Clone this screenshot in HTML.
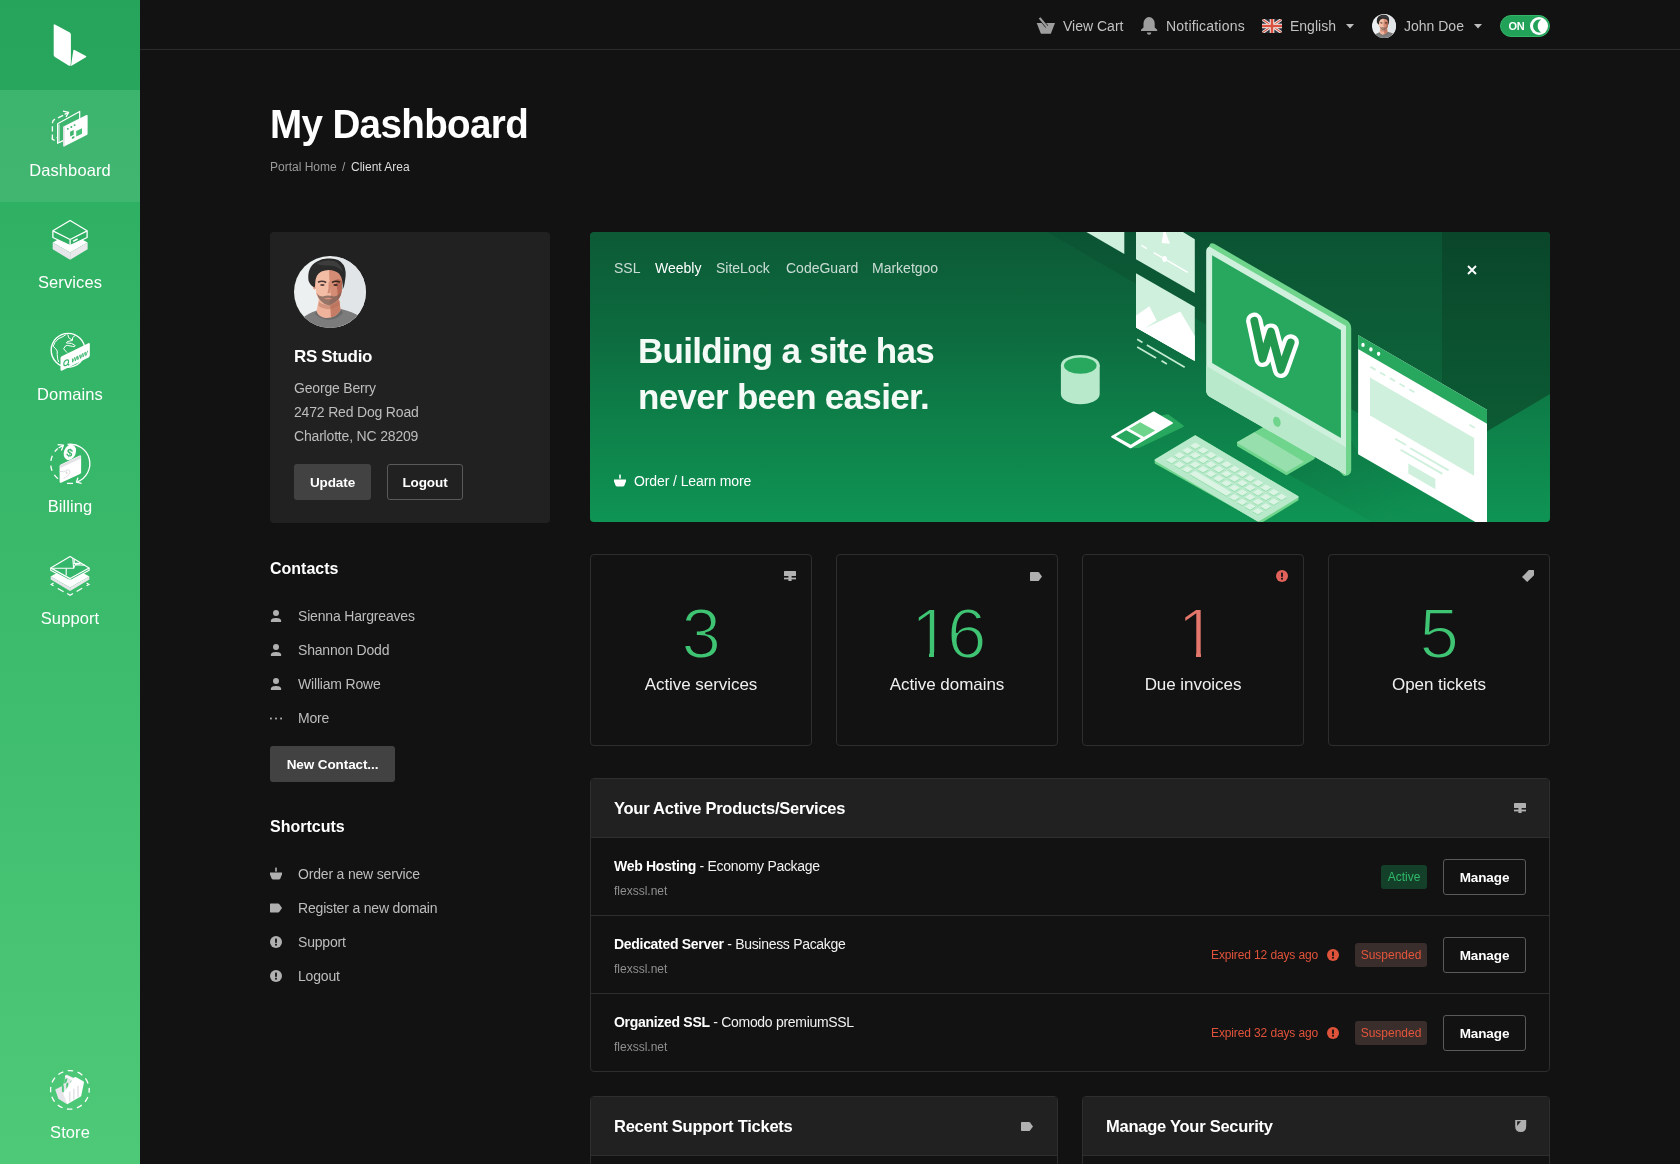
<!DOCTYPE html>
<html lang="en">
<head>
<meta charset="utf-8">
<title>My Dashboard</title>
<style>
*{box-sizing:border-box;margin:0;padding:0}
html,body{width:1680px;height:1164px;overflow:hidden;background:#121212;color:#fff;
  font-family:"Liberation Sans",Arial,sans-serif;-webkit-font-smoothing:antialiased}
.abs{position:absolute}
svg{display:block;overflow:visible}
.t{position:absolute;white-space:nowrap;line-height:1}

/* ---------- sidebar ---------- */
#side{position:absolute;left:0;top:0;width:140px;height:1164px;
  background:linear-gradient(180deg,#28ab5f 0%,#4ec978 100%)}
#side .logo{position:absolute;left:0;top:0;width:140px;height:90px;background:rgba(0,0,0,.035)}
#side .item{position:absolute;left:0;width:140px;height:112px}
#side .item.active{background:rgba(255,255,255,.085)}
#side .item .ic{position:absolute;left:44px;top:14px;width:52px;height:52px}
#side .item .lb{position:absolute;left:0;width:140px;top:70px;text-align:center;font-size:16.5px;line-height:20px;color:#fff;letter-spacing:.1px}

/* ---------- top bar ---------- */
#top{position:absolute;left:140px;top:0;width:1540px;height:50px;border-bottom:1px solid #2b2b2b}
#top .t{font-size:14px;color:#c2c2c2;top:19px}

/* ---------- heading ---------- */
#h1{left:270px;top:102.5px;font-size:41.5px;font-weight:700;letter-spacing:-.7px;color:#fff;transform:scaleX(.93);transform-origin:0 0}
.bc{font-size:12px;top:161px}

/* ---------- generic ---------- */
.card{position:absolute;background:#212121;border-radius:4px}
.btn{position:absolute;height:36px;border-radius:3px;font-size:13.5px;letter-spacing:-.1px;font-weight:700;color:#fff;text-align:center;line-height:37.5px;white-space:nowrap}
.btn.fill{background:#424242}
.btn.line{border:1px solid #5a5a5a;line-height:35.5px}
.h3{font-size:16px;font-weight:700;color:#fff}
.li{font-size:14px;color:#bdbdbd;letter-spacing:-.18px}
.box{position:absolute;border:1px solid #2e2e2e;border-radius:4px}
.num{font-size:71px;text-align:center;-webkit-text-stroke-width:1.9px;letter-spacing:-.5px}
.slab{font-size:17px;text-align:center;color:#f0f0f0;letter-spacing:-.05px}
.ph{font-size:16.5px;font-weight:700;color:#fff;letter-spacing:-.25px}
.rt{font-size:14px;color:#f2f2f2;letter-spacing:-.3px}
.rt b{font-weight:700;color:#fff}
.rd{font-size:12px;color:#8f8f8f;margin-top:1px}
.ex{font-size:12px;color:#e0533b;letter-spacing:-.12px}
.mg{border-color:#4d4d4d}
.bdg{position:absolute;height:24px;border-radius:3px;font-size:12px;line-height:24px;text-align:center;white-space:nowrap}
.bdg.grn{background:#14402a;color:#2fb869}
.bdg.red{background:#392e2b;color:#e4553c}
.tab{font-size:14px;color:rgba(255,255,255,.78)}
.tab.on{color:#fff}
.bh{font-size:35px;font-weight:700;color:#f4fbf6;letter-spacing:-.7px}
</style>
</head>
<body><div id="root" style="position:absolute;left:0;top:0;width:1680px;height:1164px;overflow:hidden;will-change:transform">

<!-- ================= SIDEBAR ================= -->
<div id="side">
  <div class="logo">
    <svg class="abs" style="left:50px;top:20px" width="40" height="50" viewBox="0 0 40 50">
      <path d="M4.9 4.4 L19.8 12.4 Q20.9 13.1 20.9 14.6 L20.9 41 L20.6 45.4 Q19.8 46.1 18.6 45.4 L4.9 37 Q3.7 36.2 3.7 34.8 L3.7 5.2 Q3.7 3.8 4.9 4.4Z" fill="#fff"/>
      <path d="M21 45.5 L23.3 30.6 Q23.5 29.3 24.6 29.9 L35.9 36 Q36.9 36.6 35.9 37.2 L22 45.4 Q20.9 46.2 21 45.5Z" fill="#fff"/>
    </svg>
  </div>
  <div class="item active" style="top:90px"><div class="ic" id="ic-dash"><svg width="52" height="52" viewBox="0 0 52 52">
<path d="M8.4 35.6V19.4Q8.4 16.4 11 15.2" stroke="#fff" stroke-width="1.3" fill="none" stroke-dasharray="5.2 3"/>
<path d="M14 13.8L19.2 11.4" stroke="#fff" stroke-width="1.3" fill="none"/>
<path d="M19 7.2L24.6 8.4L22 13" stroke="#fff" stroke-width="1.3" fill="none" stroke-linejoin="round"/><path d="M24.6 8.4L20.6 10.4" stroke="#fff" stroke-width="1.3"/>
<path d="M8.4 33.6V35.4L10.6 36.4M12.6 34L13.6 33.6" stroke="#fff" stroke-width="1.3" fill="none"/>
<path d="M13.6 19.7L35.7 7.4V20M13.6 19.7V39.3L19.2 36.6" stroke="#fff" stroke-width="1.2" fill="none" stroke-linejoin="round"/>
<path d="M15 20.4V38.4" stroke="#fff" stroke-width=".9" fill="none"/>
<path d="M19.2 23.6Q19.2 22.6 20 22.2L42.4 11.1Q43.6 10.6 43.6 11.8V29.8Q43.6 30.7 42.8 31.1L20.6 42.2Q19.2 42.8 19.2 41.6Z" fill="#fff"/>
<path d="M19.2 23.6Q19.2 22.6 20 22.2L20.6 22.6V42.2Q19.2 42.8 19.2 41.6Z" fill="#dcdce0"/>
<ellipse cx="23.9" cy="24.8" rx="1" ry=".9" fill="#3bb56c"/><ellipse cx="27.3" cy="23" rx="1" ry=".9" fill="#3bb56c"/><ellipse cx="30.6" cy="21.1" rx="1" ry=".9" fill="#3bb56c"/>
<path d="M26.1 27.7L29.7 26.1V30.8L26.1 32.4Z" fill="#3bb56c"/>
<path d="M32.2 27L38 24.3V29.7L32.2 32.4Z" fill="#45c276"/>
<path d="M27.9 33.1L30.4 31.9V34L27.9 35.1Z" fill="#3bb56c"/>
</svg></div><div class="lb">Dashboard</div></div>
  <div class="item" style="top:202px"><div class="ic" id="ic-serv" style="top:12px"><svg width="52" height="52" viewBox="0 0 52 52">
<path d="M8.7 28.6L26.1 18.8L43.6 28.6L26.1 38.4Z" fill="#fff"/>
<path d="M8.7 28.6L26.1 38.4V45.8L8.7 35.3Z" fill="#e6e6ea"/>
<path d="M43.6 28.6L26.1 38.4V45.8L43.6 35.3Z" fill="#e9e9ec"/>
<path d="M26.1 6.5L43.1 16.8V23.5L26.1 31.7L8.9 23.5V16.8Z" fill="#2eaf64" stroke="#fff" stroke-width="1.3" stroke-linejoin="round"/>
<path d="M8.9 16.8L26.1 25.5L43.1 16.8M26.1 25.5V31.7" stroke="#fff" stroke-width="1.3" fill="none" stroke-linejoin="round"/>
<path d="M29 27.3L33.6 25" stroke="#fff" stroke-width="1.5" fill="none"/>
</svg></div><div class="lb">Services</div></div>
  <div class="item" style="top:314px"><div class="ic" id="ic-dom" style="top:12px"><svg width="52" height="52" viewBox="0 0 52 52">
<circle cx="24.1" cy="24.3" r="16.9" fill="none" stroke="#fff" stroke-width="1.4"/>
<path d="M22.4 8.2Q20 10.4 14 13Q10 16.6 9.2 20.4L11.6 22.6Q14 24.4 13.2 28.4Q13.4 33.4 14.6 36" stroke="#fff" stroke-width="1" fill="none" stroke-linejoin="round"/>
<path d="M23.8 8.4L24.6 11.6L28.4 14.4L23.4 15.6L22.4 17L27.6 17.4L31.2 19.6Q30.8 21.4 28.4 20.4L23.6 19.4L21.6 19.8L19.6 22.8L23 26.6" stroke="#fff" stroke-width="1" fill="none" stroke-linejoin="round"/>
<path d="M31 9.6L28.6 11.6L28.4 14.4" stroke="#fff" stroke-width="1" fill="none"/>
<path d="M16.5 32.2Q16.5 30.8 17.7 30.2L44.4 17.2Q45.8 16.6 45.8 18.2V29.6Q45.8 30.8 44.6 31.4L18.2 44.4Q16.5 45.2 16.5 43.6Z" fill="#fff"/>
<g transform="matrix(1 -0.488 0 1 0 0)"><ellipse cx="22.2" cy="47.6" rx="2.4" ry="2.6" fill="none" stroke="#34b368" stroke-width="1.1"/><path d="M23.4 49.6L25.2 51.4" stroke="#34b368" stroke-width="1.1"/>
<text x="27.6" y="50.2" font-family="Liberation Sans, Arial, sans-serif" font-size="7.4" font-weight="700" font-style="italic" fill="#34b368" letter-spacing="-.5">www</text></g>
</svg></div><div class="lb">Domains</div></div>
  <div class="item" style="top:426px"><div class="ic" id="ic-bill" style="top:12px"><svg width="52" height="52" viewBox="0 0 52 52">
<path d="M23.6 6.5A19.4 19.4 0 0 1 33.4 43.8" stroke="#fff" stroke-width="1.3" fill="none"/>
<path d="M34 39.6L32.4 44.2L37.6 45.4" stroke="#fff" stroke-width="1.3" fill="none" stroke-linejoin="round"/>
<path d="M29 45.4H23" stroke="#fff" stroke-width="1.3"/>
<path d="M14.8 41.4A19.4 19.4 0 0 1 13.8 10.6" stroke="#fff" stroke-width="1.3" fill="none" stroke-dasharray="5.4 4.6" stroke-dashoffset="-1"/>
<path d="M13.6 6.6L19.4 7.2L17.4 12.4M19.4 7.2L14.6 10" stroke="#fff" stroke-width="1.3" fill="none" stroke-linejoin="round"/>
<ellipse cx="25.9" cy="14.3" rx="5.9" ry="8" fill="#fff" transform="rotate(22 25.9 14.3)"/>
<text x="22.6" y="18.6" font-family="Liberation Sans, Arial, sans-serif" font-size="11" font-weight="700" fill="#34b368" transform="rotate(14 25.9 14.3)">$</text>
<path d="M15.6 28.4Q15.6 27 16.8 26.4L35.6 17.6Q37.1 17 37.1 18.4V34.2Q37.1 35.3 36 35.9L17.6 44.6Q15.6 45.4 15.6 43.6Z" fill="#fff"/>
<path d="M15.8 27.4L36.6 17.6L36.8 20.4L16.4 30Z" fill="#e2e2e6"/>
<path d="M15.8 33.4Q20 35 24 31.6Q26.4 32 25.8 34.6Q24.6 38.4 19.6 40.4" stroke="#e0e0e4" stroke-width="1" fill="none"/>
<ellipse cx="22.6" cy="34.8" rx="1" ry="1.3" fill="#dcdce0"/>
</svg></div><div class="lb">Billing</div></div>
  <div class="item" style="top:538px"><div class="ic" id="ic-supp" style="top:12px"><svg width="52" height="52" viewBox="0 0 52 52">
<path d="M6.7 26.4L26.1 15.4L45.3 26.4L26.1 37.5Z" fill="#fff"/>
<path d="M6.7 26.4L26.1 37.5V40.9L6.7 29.5Z" fill="#e6e6ea"/>
<path d="M45.3 26.4L26.1 37.5V40.9L45.3 29.5Z" fill="#e9e9ec"/>
<path d="M26.1 6.5L45.1 17.9V20.2L26.1 30.8L6.7 20.2V17.9Z" fill="#35b76b" stroke="#fff" stroke-width="1.2" stroke-linejoin="round"/>
<path d="M6.7 17.9L26.1 28.6L45.1 17.9M26.1 28.6V30.8" stroke="#fff" stroke-width="1.2" fill="none" stroke-linejoin="round"/>
<path d="M8.6 18.2H29.6L28.8 8.4" stroke="#fff" stroke-width="1.1" fill="none" stroke-linejoin="round"/>
<path d="M22.2 18.4V25.6" stroke="#fff" stroke-width="1.1" fill="none"/>
<path d="M30.2 9.6V13.4H36.6" stroke="#fff" stroke-width="1.1" fill="none"/>
<path d="M29.6 18.2L31.2 14.6L41 15.2" stroke="#fff" stroke-width="1.1" fill="none" stroke-linejoin="round"/>
<path d="M9.6 33L7.2 34.4L9.6 35.8M42.6 33L45 34.4L42.6 35.8M23.2 43.4L26.1 45.2L29 43.4" stroke="#fff" stroke-width="1.2" fill="none"/>
<path d="M13.8 38.4L19.6 41.8M32.6 41.4L38.2 38.2" stroke="#fff" stroke-width="1.2" fill="none"/>
</svg></div><div class="lb">Support</div></div>
  <div class="item" style="top:1050px"><div class="ic" id="ic-store"><svg width="52" height="52" viewBox="0 0 52 52">
<circle cx="25.9" cy="25.9" r="19.3" fill="none" stroke="#fff" stroke-width="1.3" stroke-dasharray="5.6 4.5" stroke-dashoffset="2.8"/>
<path d="M11.2 25.5L19.2 21.4L21.6 11.4Q22 10.4 23 10.8L31 14.6L28 27L23.2 40.2L14.3 34.8Z" fill="#e6e6ea"/>
<path d="M21.2 12L29.6 15.8" stroke="#fff" stroke-width="1.6"/>
<path d="M17.9 22.2L19.8 21.2V28.6L17.9 27.6ZM22.3 19.6L24.2 18.6V26.2L22.3 25.4ZM26.4 17.6L28.2 16.6L26.8 22.4Z" fill="#4ac777"/>
<path d="M20.6 15.4L23.6 14L22.4 18.4L20 19.6Z" fill="#4ac777"/>
<path d="M19.2 29.5L29.4 14.2Q30.6 12.4 32.2 13.2L39.3 17.2Q40.2 17.8 39.9 19L37.1 32.2L23.2 40.2Z" fill="#fff"/>
<path d="M24.9 28V38.4L26.5 37.6V27ZM29 25.2V36L30.6 35.2V24.2ZM33.2 22.2V33.6L34.8 32.8V21.2Z" fill="#e4e4e8"/>
</svg></div><div class="lb" style="top:72px">Store</div></div>
</div>

<!-- ================= TOP BAR ================= -->
<div id="top">

  <!-- cart -->
  <svg class="abs" style="left:897px;top:17px" width="19" height="18" viewBox="0 0 19 18"><path d="M-.3 5.9H18L14 16.2Q13.7 16.8 13 16.8H4.7Q4 16.8 3.7 16.2Z" fill="#9e9e9e"/><path d="M5.6 4.5L9.9 9.7" stroke="#121212" stroke-width="3.5" fill="none"/><path d="M2.6 .9L10.6 10.5" stroke="#9e9e9e" stroke-width="2.2" fill="none"/></svg>
  <!-- bell -->
  <svg class="abs" style="left:1001px;top:16px" width="17" height="20" viewBox="0 0 17 20"><path d="M0 15V13.7L2.5 11.4V7.2A5.6 6.1 0 0 1 13.7 7.2V11.4L16.2 13.7V15Z" fill="#9e9e9e"/><path d="M5.9 16.4H10.3A2.2 2.3 0 0 1 5.9 16.4Z" fill="#9e9e9e"/></svg>
  <!-- flag -->
  <svg class="abs" style="left:1122px;top:19px" width="20" height="14" viewBox="0 0 20 14"><defs><clipPath id="fc"><rect width="20" height="14" rx="2.2"/></clipPath></defs><g clip-path="url(#fc)"><rect width="20" height="14" fill="#2b2f3a"/><path d="M0 0L20 14M20 0L0 14" stroke="#f1f1f1" stroke-width="3"/><path d="M0 0L20 14M20 0L0 14" stroke="#d9523f" stroke-width="1.1"/><path d="M10 0V14M0 7H20" stroke="#f1f1f1" stroke-width="4.6"/><path d="M10 0V14M0 7H20" stroke="#d9523f" stroke-width="2.6"/></g></svg>
  <svg class="abs" style="left:1206px;top:24px" width="8" height="5" viewBox="0 0 8 5"><path d="M0 0H8L4 4.6Z" fill="#bdbdbd"/></svg>
  <!-- avatar small -->
  <svg class="abs" style="left:1232px;top:14px" width="24" height="24" viewBox="0 0 72 72"><use href="#avg"/></svg>
  <svg class="abs" style="left:1334px;top:24px" width="8" height="5" viewBox="0 0 8 5"><path d="M0 0H8L4 4.6Z" fill="#bdbdbd"/></svg>
  <!-- toggle -->
  <div class="abs" style="left:1360px;top:15px;width:50px;height:22px;border-radius:11px;background:#22a259;border:1px solid #35b56a"></div>
  <span class="t" style="left:1368.5px;top:20.5px;font-size:11px;font-weight:700;color:#fff;letter-spacing:-.2px">ON</span>
  <svg class="abs" style="left:1390px;top:17px" width="18" height="18" viewBox="0 0 18 18"><circle cx="9" cy="9" r="9" fill="#fff"/><path d="M11.2 2.6A6.6 6.6 0 1 0 11.2 15.4A7.6 7.6 0 0 1 11.2 2.6Z" fill="#22a259"/></svg>
  <span class="t" style="left:923px">View Cart</span>
  <span class="t" style="left:1026px;letter-spacing:.2px">Notifications</span>
  <span class="t" style="left:1150px">English</span>
  <span class="t" style="left:1264px">John Doe</span>
</div>

<!-- ================= HEADING ================= -->
<div class="t" id="h1">My Dashboard</div>
<div class="t bc" style="left:270px;color:#9a9a9a">Portal Home</div>
<div class="t bc" style="left:342px;color:#9a9a9a">/</div>
<div class="t bc" style="left:351px;color:#dcdcdc">Client Area</div>


<!-- ================= PROFILE CARD ================= -->
<div class="card" style="left:270px;top:232px;width:280px;height:291px">
  <svg class="abs" style="left:24px;top:24px" width="72" height="72" viewBox="0 0 72 72">
    <defs><clipPath id="avc"><circle cx="36" cy="36" r="36"/></clipPath>
    <filter id="avb" x="-10%" y="-10%" width="120%" height="120%"><feGaussianBlur stdDeviation=".75"/></filter>
    <filter id="avb2" x="-10%" y="-10%" width="120%" height="120%"><feGaussianBlur stdDeviation="1.6"/></filter></defs>
    <g id="avg" clip-path="url(#avc)">
      <rect width="72" height="72" fill="#edf0f0"/>
      <path d="M42 0H72V72H42Z" fill="#e2e5e8" filter="url(#avb2)"/>
      <g filter="url(#avb)">
      <!-- shirt -->
      <path d="M6 64 Q14 57 23 54.5 L34 60 L47 53 Q58 55.5 67 61 L72 76 H0Z" fill="#7b7b7b"/>
      <path d="M23 54.5 Q35 66 47 53 L49 57 Q36 70 21 58Z" fill="#6a6a6a"/>
      <!-- neck -->
      <path d="M25 42 L45 42 L46.6 54 Q41 63 31 62 Q24 60 22.6 55.4Z" fill="#efb29a"/>
      <path d="M36 46 L45.2 44 L46.6 54 Q43 60 37 61.5Z" fill="#c67d66"/>
      <path d="M25 46 Q34 53 45.4 45 L45.8 49 Q34 57 24.6 50Z" fill="#b06f5b" opacity=".45"/>
      <!-- ears -->
      <ellipse cx="20.6" cy="30" rx="1.8" ry="3.4" fill="#e3a088"/>
      <!-- face -->
      <path d="M20.8 22 Q20.5 12 34 11 Q48 11 48.4 24 L47.8 35 Q46 46 35 49.6 Q25.5 47.6 22.2 38Z" fill="#f3bda5"/>
      <path d="M35 12 Q48 11.5 48.4 24 L47.8 35 Q46 46 35 49.6 Q38.5 40 35.5 29Z" fill="#d48c75"/>
      <path d="M41 24 Q47 22 48.4 26 L47.8 35 Q46.6 42 43 45 Q45 36 41 24Z" fill="#9c4a38" opacity=".55"/>
      <!-- beard -->
      <path d="M22.6 37 Q25 40.5 29 40.6 Q34 38.6 39.6 40.6 Q44.6 40 47.6 35.6 Q46 46 35 49.6 Q25.5 47.6 22.6 37Z" fill="#7d6258" opacity=".8"/>
      <path d="M29.6 42.4 Q34 41 38.6 42.4 Q34 44.2 29.6 42.4Z" fill="#d9907c"/>
      <!-- nose shadow -->
      <path d="M35.5 26 Q37.2 32 36.2 37 L33.4 37.4 Q35 33 34.6 26Z" fill="#c98068" opacity=".8"/>
      <!-- eyes/brows -->
      <path d="M24 26.2 Q28 24.2 32.2 26.4" stroke="#4a3630" stroke-width="1.7" fill="none"/>
      <path d="M38 26.4 Q42 24.2 46 26.2" stroke="#36261f" stroke-width="1.7" fill="none"/>
      <ellipse cx="28.4" cy="29" rx="2.3" ry="1.1" fill="#5a4038"/>
      <ellipse cx="41.6" cy="29" rx="2.3" ry="1.1" fill="#3f2a24"/>
      <!-- hair -->
      <path d="M14.6 25 Q12.6 11 23 5.4 Q29 1.6 36 2.6 Q45 2.4 49.6 9 Q53 15 51 25 Q50.2 31 48.6 33.6 Q49.4 23 45 17.6 Q39 12.6 31 14.4 Q23 15.6 21.6 23.6 L20.8 31.6 Q16.6 30 14.6 25Z" fill="#2b2b2b"/>
      <path d="M22 8 Q30 3 40 5 Q47 8 49 16 Q44 10 36 9.6 Q28 9.6 22 8Z" fill="#3e3e3e"/>
      </g>
    </g>
  </svg>
  <div class="t" style="left:24px;top:116px;font-size:17px;font-weight:700;letter-spacing:-.35px">RS Studio</div>
  <div class="t li" style="left:24px;top:149px">George Berry</div>
  <div class="t li" style="left:24px;top:173px">2472 Red Dog Road</div>
  <div class="t li" style="left:24px;top:197px">Charlotte, NC 28209</div>
  <div class="btn fill" style="left:24px;top:232px;width:77px">Update</div>
  <div class="btn line" style="left:117px;top:232px;width:76px">Logout</div>
</div>

<!-- ================= CONTACTS ================= -->
<div class="t h3" style="left:270px;top:561px">Contacts</div>
<svg class="abs ico-p" style="left:270px;top:609px" width="12" height="14" viewBox="0 0 12 14"><circle cx="6" cy="4" r="3" fill="#b0b0b0"/><path d="M.9 13.1V11.6C.9 9.7 3.8 9 6 9S11.1 9.7 11.1 11.6V13.1Z" fill="#b0b0b0"/></svg>
<svg class="abs ico-p" style="left:270px;top:643px" width="12" height="14" viewBox="0 0 12 14"><circle cx="6" cy="4" r="3" fill="#b0b0b0"/><path d="M.9 13.1V11.6C.9 9.7 3.8 9 6 9S11.1 9.7 11.1 11.6V13.1Z" fill="#b0b0b0"/></svg>
<svg class="abs ico-p" style="left:270px;top:677px" width="12" height="14" viewBox="0 0 12 14"><circle cx="6" cy="4" r="3" fill="#b0b0b0"/><path d="M.9 13.1V11.6C.9 9.7 3.8 9 6 9S11.1 9.7 11.1 11.6V13.1Z" fill="#b0b0b0"/></svg>
<svg class="abs" style="left:270px;top:717px" width="12" height="3" viewBox="0 0 12 3"><rect x="0" y=".6" width="1.8" height="1.8" fill="#b0b0b0"/><rect x="5.1" y=".6" width="1.8" height="1.8" fill="#b0b0b0"/><rect x="10.2" y=".6" width="1.8" height="1.8" fill="#b0b0b0"/></svg>
<div class="t li" style="left:298px;top:609px">Sienna Hargreaves</div>
<div class="t li" style="left:298px;top:643px">Shannon Dodd</div>
<div class="t li" style="left:298px;top:677px">William Rowe</div>
<div class="t li" style="left:298px;top:711px">More</div>
<div class="btn fill" style="left:270px;top:746px;width:125px">New Contact...</div>

<!-- ================= SHORTCUTS ================= -->
<div class="t h3" style="left:270px;top:819px">Shortcuts</div>
<svg class="abs" style="left:270px;top:867px" width="12" height="13" viewBox="0 0 12 13"><rect x="5.2" y=".6" width="1.6" height="4" fill="#b0b0b0"/><path d="M0 5.6H12V7.2L10.4 11.6Q10.1 12.4 9.2 12.4H2.8Q1.9 12.4 1.6 11.6L0 7.2Z" fill="#b0b0b0"/></svg>
<svg class="abs" style="left:270px;top:903px" width="12" height="10" viewBox="0 0 12 10"><path d="M0 1.2Q0 .6.6.6H8.2Q8.8.6 9.2 1L12 5L9.2 9Q8.8 9.4 8.2 9.4H.6Q0 9.4 0 8.8Z" fill="#b0b0b0"/></svg>
<svg class="abs" style="left:270px;top:936px" width="12" height="12" viewBox="0 0 12 12"><circle cx="6" cy="6" r="6" fill="#b0b0b0"/><rect x="5.1" y="2.6" width="1.8" height="4.2" fill="#121212"/><rect x="5.1" y="7.8" width="1.8" height="1.8" fill="#121212"/></svg>
<svg class="abs" style="left:270px;top:970px" width="12" height="12" viewBox="0 0 12 12"><circle cx="6" cy="6" r="6" fill="#b0b0b0"/><rect x="5.1" y="2.6" width="1.8" height="4.2" fill="#121212"/><rect x="5.1" y="7.8" width="1.8" height="1.8" fill="#121212"/></svg>
<div class="t li" style="left:298px;top:867px">Order a new service</div>
<div class="t li" style="left:298px;top:901px">Register a new domain</div>
<div class="t li" style="left:298px;top:935px">Support</div>
<div class="t li" style="left:298px;top:969px">Logout</div>


<!-- ================= BANNER ================= -->
<div id="banner" class="abs" style="left:590px;top:232px;width:960px;height:290px;border-radius:4px;overflow:hidden;background:linear-gradient(180deg,#0c5a36 0%,#0d6b3f 35%,#0e8049 65%,#0f9454 100%)">
<svg class="abs" style="left:0;top:0" width="960" height="290" viewBox="590 232 960 290">
<defs><linearGradient id="wg1" gradientUnits="userSpaceOnUse" x1="0" y1="232" x2="0" y2="462"><stop offset="0" stop-color="#0b5433"/><stop offset="1" stop-color="#0e6a3d"/></linearGradient><linearGradient id="wg2" gradientUnits="userSpaceOnUse" x1="0" y1="232" x2="0" y2="458"><stop offset="0" stop-color="#0a462a"/><stop offset="1" stop-color="#0c5e36"/></linearGradient></defs>
<path d="M1047.0 232.0 L1442.0 232.0 L1442.0 462.0Z" fill="url(#wg1)" />
<path d="M1442.0 232.0 L1550.0 232.0 L1550.0 394.0 L1442.0 458.0Z" fill="url(#wg2)" />
<defs><linearGradient id="fs" gradientUnits="userSpaceOnUse" x1="1300" y1="445" x2="1400" y2="530"><stop offset="0" stop-color="#000" stop-opacity=".10"/><stop offset="1" stop-color="#000" stop-opacity=".02"/></linearGradient></defs>
<path d="M1262.0 446.0 L1351.0 440.0 L1358.0 454.0 L1476.0 522.0 L1372.0 522.0 L1286.0 473.0Z" fill="url(#fs)" />
<path d="M1086.4 232.0 L1124.3 232.0 L1124.3 253.9Z" fill="#cff0dc" />
<path d="M1136.0 232.0 L1183.0 232.0 L1194.8 239.2 L1194.8 292.9 L1136.0 259.3Z" fill="#cff0dc" />
<path d="M1163.4 232.0 L1161.6 243.0 L1170.0 243.8 L1165.6 232.0Z" fill="#fff" />
<path d="M1141.4 245.3 L1146.8 248.6" stroke="#fff" stroke-width="1.5" stroke-linecap="butt" fill="none"/>
<path d="M1153.7 252.6 L1187.8 272.4" stroke="#fff" stroke-width="1.5" stroke-linecap="butt" fill="none"/>
<ellipse cx="1164.6" cy="259" rx="2.4" ry="3" fill="#fff"/>
<path d="M1136.0 273.2 L1194.8 306.9 L1194.8 360.9 L1136.0 327.4Z" fill="#cff0dc" />
<path d="M1136.0 315.5 L1149.4 306.3 L1156.6 320.6 L1146.0 327.4 L1194.8 360.9 L1136.0 327.4Z" fill="#fff" />
<path d="M1146.5 327.6 L1180.3 311.6 L1194.8 336.0 L1194.8 360.9 L1136.0 327.4 L1146.5 327.6Z" fill="#fff" />
<path d="M1137.2 339.3 L1142.5 342.4" stroke="#c3ecd2" stroke-width="1.7" stroke-linecap="butt" fill="none"/>
<path d="M1146.8 344.9 L1184.7 367.2" stroke="#c3ecd2" stroke-width="1.7" stroke-linecap="butt" fill="none"/>
<path d="M1137.2 346.9 L1156.1 357.9" stroke="#c3ecd2" stroke-width="1.7" stroke-linecap="butt" fill="none"/>
<path d="M1161.5 360.8 L1166.9 364.0" stroke="#c3ecd2" stroke-width="1.7" stroke-linecap="butt" fill="none"/>
<path d="M1060.9 365.3 V394 A19.4 10.3 0 0 0 1099.7 394 V365.3Z" fill="#b7e9ca"/>
<ellipse cx="1080.3" cy="365.3" rx="19.4" ry="10.3" fill="#b7e9ca"/>
<ellipse cx="1080.3" cy="365.6" rx="16.3" ry="8.2" fill="#27a85e"/>
<path d="M1160.0 416.4 L1168.0 415.0 L1183.0 426.2 L1138.6 447.3 L1130.5 447.4 L1172.0 423.0Z" fill="#27a85e" stroke="#27a85e" stroke-width="1.5" stroke-linejoin="round"/>
<path d="M1112.0 436.7 L1153.6 412.3 L1172.0 423.0 L1130.5 447.4Z" fill="#fff" stroke="#fff" stroke-width="1.8" stroke-linejoin="round"/>
<path d="M1115.8 436.4 L1126.2 430.3 L1140.7 438.3 L1130.8 444.7Z" fill="#27a85e" />
<path d="M1129.2 428.7 L1140.2 422.2 L1155.2 430.5 L1143.9 437.0Z" fill="#6fd58c" />
<path d="M1237.8 442.6 L1286.5 471.2 L1314.0 455.3 L1314.0 458.3 L1286.5 474.4 L1237.8 445.6Z" fill="#6fd58c" stroke="#6fd58c" stroke-width="1.5" stroke-linejoin="round"/>
<path d="M1237.8 442.6 L1286.5 471.2 L1314.0 455.3 L1265.3 426.7Z" fill="#6fd58c" stroke="#6fd58c" stroke-width="1.5" stroke-linejoin="round"/>
<path d="M1237.8 442.6 L1286.5 471.2 L1303.0 461.7 L1254.3 433.1Z" fill="#98dfae" stroke="#98dfae" stroke-width="1.2" stroke-linejoin="round"/>
<path d="M1207.2 249.4 L1210.6 243.6 Q1212.4 242.6 1214.2 243.8 L1347.6 320.8 Q1351.2 324 1351.2 328.5 L1351.2 470.5 Q1351.2 473.6 1348.2 475.2 L1344 476 L1340 472 Z" fill="#6fd58c"/>
<path d="M1206.2 251.2 Q1206.2 247.6 1209.6 246.8 L1346.0 326.0 L1346.0 474.8 L1209.7 396.8 Q1206.2 394.4 1206.2 390.6 Z" fill="#cff0dc"/>
<path d="M1206.2 365.9 L1346.0 447.2 L1346.0 474.8 L1209.7 396.8 Q1206.2 394.4 1206.2 390.6 Z" fill="#b7e9ca"/>
<path d="M1212.1 255.2 L1340.9 330.1 L1340.9 438.0 L1212.1 363.1Z" fill="#27a85e" />
<ellipse cx="1276.9" cy="421.8" rx="3.6" ry="5.2" fill="#6fd58c" transform="rotate(-18 1276.9 421.8)"/>
<path d="M1254.3 320.8 L1262.6 358.8 L1270.9 331.6 L1281 369.8 L1290.7 342.4" stroke="#fff" stroke-width="16.4" stroke-linecap="round" stroke-linejoin="round" fill="none"/>
<path d="M1254.3 320.8 L1262.6 358.8 L1270.9 331.6 L1281 369.8 L1290.7 342.4" stroke="#22994f" stroke-width="7.8" stroke-linecap="round" stroke-linejoin="round" fill="none"/>
<path d="M1155.7 462.9 L1261.2 521.9 L1297.5 499.7 L1297.5 496.9 L1195.2 436.3 L1155.7 460.1Z" fill="#6fd58c" stroke="#6fd58c" stroke-width="2" stroke-linejoin="round"/>
<path d="M1195.2 436.3 L1297.5 496.9 L1258.0 520.7 L1155.7 460.1Z" fill="#b7e9ca" stroke="#b7e9ca" stroke-width="2" stroke-linejoin="round"/>
<path d="M1195.3 443.8 L1200.0 446.6 L1195.3 449.4 L1190.6 446.6Z" fill="#8fdca6" stroke="#8fdca6" stroke-width=".9" stroke-linejoin="round"/><path d="M1195.3 443.0 L1200.0 445.8 L1195.3 448.6 L1190.6 445.8Z" fill="#dbf4e4" stroke="#dbf4e4" stroke-width=".9" stroke-linejoin="round"/>
<path d="M1203.2 448.4 L1207.9 451.2 L1203.1 454.1 L1198.4 451.3Z" fill="#8fdca6" stroke="#8fdca6" stroke-width=".9" stroke-linejoin="round"/><path d="M1203.2 447.6 L1207.9 450.4 L1203.1 453.3 L1198.4 450.5Z" fill="#dbf4e4" stroke="#dbf4e4" stroke-width=".9" stroke-linejoin="round"/>
<path d="M1211.0 453.1 L1215.7 455.9 L1211.0 458.7 L1206.3 455.9Z" fill="#8fdca6" stroke="#8fdca6" stroke-width=".9" stroke-linejoin="round"/><path d="M1211.0 452.3 L1215.7 455.1 L1211.0 457.9 L1206.3 455.1Z" fill="#dbf4e4" stroke="#dbf4e4" stroke-width=".9" stroke-linejoin="round"/>
<path d="M1218.9 457.7 L1223.6 460.5 L1218.8 463.4 L1214.1 460.6Z" fill="#8fdca6" stroke="#8fdca6" stroke-width=".9" stroke-linejoin="round"/><path d="M1218.9 456.9 L1223.6 459.7 L1218.8 462.6 L1214.1 459.8Z" fill="#dbf4e4" stroke="#dbf4e4" stroke-width=".9" stroke-linejoin="round"/>
<path d="M1226.7 462.4 L1231.4 465.2 L1226.7 468.0 L1222.0 465.2Z" fill="#8fdca6" stroke="#8fdca6" stroke-width=".9" stroke-linejoin="round"/><path d="M1226.7 461.6 L1231.4 464.4 L1226.7 467.2 L1222.0 464.4Z" fill="#dbf4e4" stroke="#dbf4e4" stroke-width=".9" stroke-linejoin="round"/>
<path d="M1234.5 467.0 L1239.3 469.8 L1234.5 472.7 L1229.8 469.9Z" fill="#8fdca6" stroke="#8fdca6" stroke-width=".9" stroke-linejoin="round"/><path d="M1234.5 466.2 L1239.3 469.0 L1234.5 471.9 L1229.8 469.1Z" fill="#dbf4e4" stroke="#dbf4e4" stroke-width=".9" stroke-linejoin="round"/>
<path d="M1242.4 471.7 L1247.1 474.4 L1242.4 477.3 L1237.6 474.5Z" fill="#8fdca6" stroke="#8fdca6" stroke-width=".9" stroke-linejoin="round"/><path d="M1242.4 470.9 L1247.1 473.6 L1242.4 476.5 L1237.6 473.7Z" fill="#dbf4e4" stroke="#dbf4e4" stroke-width=".9" stroke-linejoin="round"/>
<path d="M1250.2 476.3 L1254.9 479.1 L1250.2 482.0 L1245.5 479.2Z" fill="#8fdca6" stroke="#8fdca6" stroke-width=".9" stroke-linejoin="round"/><path d="M1250.2 475.5 L1254.9 478.3 L1250.2 481.2 L1245.5 478.4Z" fill="#dbf4e4" stroke="#dbf4e4" stroke-width=".9" stroke-linejoin="round"/>
<path d="M1258.1 481.0 L1262.8 483.7 L1258.0 486.6 L1253.3 483.8Z" fill="#8fdca6" stroke="#8fdca6" stroke-width=".9" stroke-linejoin="round"/><path d="M1258.1 480.2 L1262.8 482.9 L1258.0 485.8 L1253.3 483.0Z" fill="#dbf4e4" stroke="#dbf4e4" stroke-width=".9" stroke-linejoin="round"/>
<path d="M1265.9 485.6 L1270.6 488.4 L1265.9 491.2 L1261.2 488.5Z" fill="#8fdca6" stroke="#8fdca6" stroke-width=".9" stroke-linejoin="round"/><path d="M1265.9 484.8 L1270.6 487.6 L1265.9 490.4 L1261.2 487.7Z" fill="#dbf4e4" stroke="#dbf4e4" stroke-width=".9" stroke-linejoin="round"/>
<path d="M1273.8 490.2 L1278.5 493.0 L1273.7 495.9 L1269.0 493.1Z" fill="#8fdca6" stroke="#8fdca6" stroke-width=".9" stroke-linejoin="round"/><path d="M1273.8 489.4 L1278.5 492.2 L1273.7 495.1 L1269.0 492.3Z" fill="#dbf4e4" stroke="#dbf4e4" stroke-width=".9" stroke-linejoin="round"/>
<path d="M1281.6 494.9 L1286.3 497.7 L1281.6 500.5 L1276.9 497.7Z" fill="#8fdca6" stroke="#8fdca6" stroke-width=".9" stroke-linejoin="round"/><path d="M1281.6 494.1 L1286.3 496.9 L1281.6 499.7 L1276.9 496.9Z" fill="#dbf4e4" stroke="#dbf4e4" stroke-width=".9" stroke-linejoin="round"/>
<path d="M1187.4 448.5 L1192.1 451.3 L1187.4 454.2 L1182.7 451.4Z" fill="#8fdca6" stroke="#8fdca6" stroke-width=".9" stroke-linejoin="round"/><path d="M1187.4 447.7 L1192.1 450.5 L1187.4 453.4 L1182.7 450.6Z" fill="#dbf4e4" stroke="#dbf4e4" stroke-width=".9" stroke-linejoin="round"/>
<path d="M1195.3 453.2 L1200.0 456.0 L1195.2 458.8 L1190.5 456.0Z" fill="#8fdca6" stroke="#8fdca6" stroke-width=".9" stroke-linejoin="round"/><path d="M1195.3 452.4 L1200.0 455.2 L1195.2 458.0 L1190.5 455.2Z" fill="#dbf4e4" stroke="#dbf4e4" stroke-width=".9" stroke-linejoin="round"/>
<path d="M1203.1 457.8 L1207.8 460.6 L1203.1 463.5 L1198.4 460.7Z" fill="#8fdca6" stroke="#8fdca6" stroke-width=".9" stroke-linejoin="round"/><path d="M1203.1 457.0 L1207.8 459.8 L1203.1 462.7 L1198.4 459.9Z" fill="#dbf4e4" stroke="#dbf4e4" stroke-width=".9" stroke-linejoin="round"/>
<path d="M1211.0 462.5 L1215.7 465.3 L1210.9 468.1 L1206.2 465.3Z" fill="#8fdca6" stroke="#8fdca6" stroke-width=".9" stroke-linejoin="round"/><path d="M1211.0 461.7 L1215.7 464.5 L1210.9 467.3 L1206.2 464.5Z" fill="#dbf4e4" stroke="#dbf4e4" stroke-width=".9" stroke-linejoin="round"/>
<path d="M1218.8 467.1 L1223.5 469.9 L1218.8 472.8 L1214.1 470.0Z" fill="#8fdca6" stroke="#8fdca6" stroke-width=".9" stroke-linejoin="round"/><path d="M1218.8 466.3 L1223.5 469.1 L1218.8 472.0 L1214.1 469.2Z" fill="#dbf4e4" stroke="#dbf4e4" stroke-width=".9" stroke-linejoin="round"/>
<path d="M1226.6 471.8 L1231.4 474.6 L1226.6 477.4 L1221.9 474.6Z" fill="#8fdca6" stroke="#8fdca6" stroke-width=".9" stroke-linejoin="round"/><path d="M1226.6 471.0 L1231.4 473.8 L1226.6 476.6 L1221.9 473.8Z" fill="#dbf4e4" stroke="#dbf4e4" stroke-width=".9" stroke-linejoin="round"/>
<path d="M1234.5 476.4 L1239.2 479.2 L1234.5 482.1 L1229.7 479.3Z" fill="#8fdca6" stroke="#8fdca6" stroke-width=".9" stroke-linejoin="round"/><path d="M1234.5 475.6 L1239.2 478.4 L1234.5 481.3 L1229.7 478.5Z" fill="#dbf4e4" stroke="#dbf4e4" stroke-width=".9" stroke-linejoin="round"/>
<path d="M1242.3 481.1 L1247.0 483.9 L1242.3 486.7 L1237.6 483.9Z" fill="#8fdca6" stroke="#8fdca6" stroke-width=".9" stroke-linejoin="round"/><path d="M1242.3 480.3 L1247.0 483.1 L1242.3 485.9 L1237.6 483.1Z" fill="#dbf4e4" stroke="#dbf4e4" stroke-width=".9" stroke-linejoin="round"/>
<path d="M1250.2 485.7 L1254.9 488.5 L1250.1 491.4 L1245.4 488.6Z" fill="#8fdca6" stroke="#8fdca6" stroke-width=".9" stroke-linejoin="round"/><path d="M1250.2 484.9 L1254.9 487.7 L1250.1 490.6 L1245.4 487.8Z" fill="#dbf4e4" stroke="#dbf4e4" stroke-width=".9" stroke-linejoin="round"/>
<path d="M1258.0 490.4 L1262.7 493.1 L1258.0 496.0 L1253.3 493.2Z" fill="#8fdca6" stroke="#8fdca6" stroke-width=".9" stroke-linejoin="round"/><path d="M1258.0 489.6 L1262.7 492.3 L1258.0 495.2 L1253.3 492.4Z" fill="#dbf4e4" stroke="#dbf4e4" stroke-width=".9" stroke-linejoin="round"/>
<path d="M1265.9 495.0 L1270.6 497.8 L1265.8 500.6 L1261.1 497.9Z" fill="#8fdca6" stroke="#8fdca6" stroke-width=".9" stroke-linejoin="round"/><path d="M1265.9 494.2 L1270.6 497.0 L1265.8 499.8 L1261.1 497.1Z" fill="#dbf4e4" stroke="#dbf4e4" stroke-width=".9" stroke-linejoin="round"/>
<path d="M1273.7 499.7 L1278.4 502.4 L1273.7 505.3 L1269.0 502.5Z" fill="#8fdca6" stroke="#8fdca6" stroke-width=".9" stroke-linejoin="round"/><path d="M1273.7 498.9 L1278.4 501.6 L1273.7 504.5 L1269.0 501.7Z" fill="#dbf4e4" stroke="#dbf4e4" stroke-width=".9" stroke-linejoin="round"/>
<path d="M1179.5 453.3 L1184.2 456.1 L1179.5 458.9 L1174.8 456.2Z" fill="#8fdca6" stroke="#8fdca6" stroke-width=".9" stroke-linejoin="round"/><path d="M1179.5 452.5 L1184.2 455.3 L1179.5 458.1 L1174.8 455.4Z" fill="#dbf4e4" stroke="#dbf4e4" stroke-width=".9" stroke-linejoin="round"/>
<path d="M1187.4 458.0 L1192.1 460.7 L1187.3 463.6 L1182.6 460.8Z" fill="#8fdca6" stroke="#8fdca6" stroke-width=".9" stroke-linejoin="round"/><path d="M1187.4 457.2 L1192.1 459.9 L1187.3 462.8 L1182.6 460.0Z" fill="#dbf4e4" stroke="#dbf4e4" stroke-width=".9" stroke-linejoin="round"/>
<path d="M1195.2 462.6 L1199.9 465.4 L1195.2 468.2 L1190.5 465.5Z" fill="#8fdca6" stroke="#8fdca6" stroke-width=".9" stroke-linejoin="round"/><path d="M1195.2 461.8 L1199.9 464.6 L1195.2 467.4 L1190.5 464.7Z" fill="#dbf4e4" stroke="#dbf4e4" stroke-width=".9" stroke-linejoin="round"/>
<path d="M1203.1 467.2 L1207.8 470.0 L1203.0 472.9 L1198.3 470.1Z" fill="#8fdca6" stroke="#8fdca6" stroke-width=".9" stroke-linejoin="round"/><path d="M1203.1 466.4 L1207.8 469.2 L1203.0 472.1 L1198.3 469.3Z" fill="#dbf4e4" stroke="#dbf4e4" stroke-width=".9" stroke-linejoin="round"/>
<path d="M1210.9 471.9 L1215.6 474.7 L1210.9 477.5 L1206.2 474.7Z" fill="#8fdca6" stroke="#8fdca6" stroke-width=".9" stroke-linejoin="round"/><path d="M1210.9 471.1 L1215.6 473.9 L1210.9 476.7 L1206.2 473.9Z" fill="#dbf4e4" stroke="#dbf4e4" stroke-width=".9" stroke-linejoin="round"/>
<path d="M1218.7 476.5 L1223.5 479.3 L1218.7 482.2 L1214.0 479.4Z" fill="#8fdca6" stroke="#8fdca6" stroke-width=".9" stroke-linejoin="round"/><path d="M1218.7 475.7 L1223.5 478.5 L1218.7 481.4 L1214.0 478.6Z" fill="#dbf4e4" stroke="#dbf4e4" stroke-width=".9" stroke-linejoin="round"/>
<path d="M1226.6 481.2 L1231.3 484.0 L1226.6 486.8 L1221.8 484.0Z" fill="#8fdca6" stroke="#8fdca6" stroke-width=".9" stroke-linejoin="round"/><path d="M1226.6 480.4 L1231.3 483.2 L1226.6 486.0 L1221.8 483.2Z" fill="#dbf4e4" stroke="#dbf4e4" stroke-width=".9" stroke-linejoin="round"/>
<path d="M1234.4 485.8 L1239.1 488.6 L1234.4 491.5 L1229.7 488.7Z" fill="#8fdca6" stroke="#8fdca6" stroke-width=".9" stroke-linejoin="round"/><path d="M1234.4 485.0 L1239.1 487.8 L1234.4 490.7 L1229.7 487.9Z" fill="#dbf4e4" stroke="#dbf4e4" stroke-width=".9" stroke-linejoin="round"/>
<path d="M1242.3 490.5 L1247.0 493.3 L1242.2 496.1 L1237.5 493.3Z" fill="#8fdca6" stroke="#8fdca6" stroke-width=".9" stroke-linejoin="round"/><path d="M1242.3 489.7 L1247.0 492.5 L1242.2 495.3 L1237.5 492.5Z" fill="#dbf4e4" stroke="#dbf4e4" stroke-width=".9" stroke-linejoin="round"/>
<path d="M1250.1 495.1 L1254.8 497.9 L1250.1 500.8 L1245.4 498.0Z" fill="#8fdca6" stroke="#8fdca6" stroke-width=".9" stroke-linejoin="round"/><path d="M1250.1 494.3 L1254.8 497.1 L1250.1 500.0 L1245.4 497.2Z" fill="#dbf4e4" stroke="#dbf4e4" stroke-width=".9" stroke-linejoin="round"/>
<path d="M1258.0 499.8 L1262.7 502.6 L1257.9 505.4 L1253.2 502.6Z" fill="#8fdca6" stroke="#8fdca6" stroke-width=".9" stroke-linejoin="round"/><path d="M1258.0 499.0 L1262.7 501.8 L1257.9 504.6 L1253.2 501.8Z" fill="#dbf4e4" stroke="#dbf4e4" stroke-width=".9" stroke-linejoin="round"/>
<path d="M1265.8 504.4 L1270.5 507.2 L1265.8 510.1 L1261.1 507.3Z" fill="#8fdca6" stroke="#8fdca6" stroke-width=".9" stroke-linejoin="round"/><path d="M1265.8 503.6 L1270.5 506.4 L1265.8 509.3 L1261.1 506.5Z" fill="#dbf4e4" stroke="#dbf4e4" stroke-width=".9" stroke-linejoin="round"/>
<path d="M1171.6 458.1 L1176.3 460.9 L1171.6 463.7 L1166.9 460.9Z" fill="#8fdca6" stroke="#8fdca6" stroke-width=".9" stroke-linejoin="round"/><path d="M1171.6 457.3 L1176.3 460.1 L1171.6 462.9 L1166.9 460.1Z" fill="#dbf4e4" stroke="#dbf4e4" stroke-width=".9" stroke-linejoin="round"/>
<path d="M1179.5 462.7 L1184.2 465.5 L1179.4 468.4 L1174.7 465.6Z" fill="#8fdca6" stroke="#8fdca6" stroke-width=".9" stroke-linejoin="round"/><path d="M1179.5 461.9 L1184.2 464.7 L1179.4 467.6 L1174.7 464.8Z" fill="#dbf4e4" stroke="#dbf4e4" stroke-width=".9" stroke-linejoin="round"/>
<path d="M1187.3 467.4 L1192.0 470.1 L1187.3 473.0 L1182.6 470.2Z" fill="#8fdca6" stroke="#8fdca6" stroke-width=".9" stroke-linejoin="round"/><path d="M1187.3 466.6 L1192.0 469.3 L1187.3 472.2 L1182.6 469.4Z" fill="#dbf4e4" stroke="#dbf4e4" stroke-width=".9" stroke-linejoin="round"/>
<path d="M1195.2 472.0 L1231.2 493.4 L1226.5 496.2 L1190.4 474.9Z" fill="#8fdca6" stroke="#8fdca6" stroke-width=".9" stroke-linejoin="round"/><path d="M1195.2 471.2 L1231.2 492.6 L1226.5 495.4 L1190.4 474.1Z" fill="#dbf4e4" stroke="#dbf4e4" stroke-width=".9" stroke-linejoin="round"/>
<path d="M1234.4 495.2 L1239.1 498.0 L1234.3 500.9 L1229.6 498.1Z" fill="#8fdca6" stroke="#8fdca6" stroke-width=".9" stroke-linejoin="round"/><path d="M1234.4 494.4 L1239.1 497.2 L1234.3 500.1 L1229.6 497.3Z" fill="#dbf4e4" stroke="#dbf4e4" stroke-width=".9" stroke-linejoin="round"/>
<path d="M1242.2 499.9 L1246.9 502.7 L1242.2 505.5 L1237.5 502.7Z" fill="#8fdca6" stroke="#8fdca6" stroke-width=".9" stroke-linejoin="round"/><path d="M1242.2 499.1 L1246.9 501.9 L1242.2 504.7 L1237.5 501.9Z" fill="#dbf4e4" stroke="#dbf4e4" stroke-width=".9" stroke-linejoin="round"/>
<path d="M1250.1 504.5 L1254.8 507.3 L1250.0 510.2 L1245.3 507.4Z" fill="#8fdca6" stroke="#8fdca6" stroke-width=".9" stroke-linejoin="round"/><path d="M1250.1 503.7 L1254.8 506.5 L1250.0 509.4 L1245.3 506.6Z" fill="#dbf4e4" stroke="#dbf4e4" stroke-width=".9" stroke-linejoin="round"/>
<path d="M1257.9 509.2 L1262.6 512.0 L1257.9 514.8 L1253.2 512.0Z" fill="#8fdca6" stroke="#8fdca6" stroke-width=".9" stroke-linejoin="round"/><path d="M1257.9 508.4 L1262.6 511.2 L1257.9 514.0 L1253.2 511.2Z" fill="#dbf4e4" stroke="#dbf4e4" stroke-width=".9" stroke-linejoin="round"/>
<path d="M1358.1 335.1 L1487.0 409.7 L1487.0 522.0 L1475.4 522.0 L1358.1 454.2Z" fill="#fff" />
<path d="M1358.1 335.1 L1487.0 409.7 L1487.0 423.7 L1358.1 349.1Z" fill="#27a85e" />
<ellipse cx="1363.0" cy="344.9" rx="1.7" ry="2.1" fill="#fff"/>
<ellipse cx="1370.9" cy="349.4" rx="1.7" ry="2.1" fill="#fff"/>
<ellipse cx="1378.6" cy="353.8" rx="1.7" ry="2.1" fill="#fff"/>
<path d="M1370.4 366.9 L1375.6 369.9" stroke="#cff0dc" stroke-width="1.8" stroke-linecap="butt" fill="none"/>
<path d="M1380.1 372.5 L1385.3 375.5" stroke="#cff0dc" stroke-width="1.8" stroke-linecap="butt" fill="none"/>
<path d="M1389.8 378.1 L1395.0 381.1" stroke="#cff0dc" stroke-width="1.8" stroke-linecap="butt" fill="none"/>
<path d="M1399.5 383.7 L1404.7 386.7" stroke="#cff0dc" stroke-width="1.8" stroke-linecap="butt" fill="none"/>
<path d="M1409.2 389.3 L1414.4 392.3" stroke="#cff0dc" stroke-width="1.8" stroke-linecap="butt" fill="none"/>
<path d="M1370.0 377.5 L1474.1 437.9 L1474.1 475.8 L1370.0 415.5Z" fill="#cff0dc" />
<path d="M1469.5 424.7 L1474.6 427.7" stroke="#cff0dc" stroke-width="1.6" stroke-linecap="butt" fill="none"/>
<path d="M1395.2 438.7 L1406.0 445.0" stroke="#cff0dc" stroke-width="1.8" stroke-linecap="butt" fill="none"/>
<path d="M1409.9 448.0 L1448.6 470.4" stroke="#cff0dc" stroke-width="1.8" stroke-linecap="butt" fill="none"/>
<path d="M1400.6 449.7 L1442.4 473.9" stroke="#cff0dc" stroke-width="1.8" stroke-linecap="butt" fill="none"/>
<path d="M1408.3 463.4 L1435.4 479.0 L1435.4 489.2 L1408.3 473.6Z" fill="#cff0dc" />
</svg>
  <div class="t tab" style="left:24px;top:29px">SSL</div>
  <div class="t tab on" style="left:65px;top:29px">Weebly</div>
  <div class="t tab" style="left:126px;top:29px">SiteLock</div>
  <div class="t tab" style="left:196px;top:29px">CodeGuard</div>
  <div class="t tab" style="left:282px;top:29px">Marketgoo</div>
  <div class="t bh" style="left:48px;top:101px">Building a site has</div>
  <div class="t bh" style="left:48px;top:147px">never been easier.</div>
  <svg class="abs" style="left:24px;top:242px" width="12" height="13" viewBox="0 0 12 13"><rect x="5.2" y=".6" width="1.6" height="4" fill="#fff"/><path d="M0 5.6H12V7.2L10.4 11.6Q10.1 12.4 9.2 12.4H2.8Q1.9 12.4 1.6 11.6L0 7.2Z" fill="#fff"/></svg>
  <div class="t" style="left:44px;top:242px;font-size:14px;color:#fff;letter-spacing:-.1px">Order / Learn more</div>
  <svg class="abs" style="left:877px;top:33px" width="10" height="10" viewBox="0 0 10 10"><path d="M1 1L9 9M9 1L1 9" stroke="#fff" stroke-width="1.9" fill="none"/></svg>
</div>


<!-- ================= STATS ================= -->
<div class="box" style="left:590px;top:554px;width:222px;height:192px"></div>
<svg class="abs" style="left:784px;top:571px" width="12" height="10" viewBox="0 0 12 10"><rect x="0" y="0" width="12" height="5" rx=".6" fill="#b0b0b0"/><rect x="4.4" y="5" width="3.2" height="5" fill="#b0b0b0"/><rect x="0" y="6.6" width="12" height="1.8" fill="#b0b0b0"/></svg>
<div class="t num" style="left:590px;top:598px;width:222px;color:#3fc473;-webkit-text-stroke-color:#121212">3</div>
<div class="t slab" style="left:590px;top:676px;width:222px">Active services</div>
<div class="box" style="left:836px;top:554px;width:222px;height:192px"></div>
<svg class="abs" style="left:1030px;top:572px" width="12" height="9" viewBox="0 0 12 9"><path d="M0 .8Q0 .1.7.1H8Q8.6.1 9 .6L12 4.5L9 8.4Q8.6 8.9 8 8.9H.7Q0 8.9 0 8.2Z" fill="#b0b0b0"/></svg>
<div class="t num" style="left:836px;top:598px;width:222px;color:#3fc473;-webkit-text-stroke-color:#121212"><span style="position:relative;left:3px">1</span>6</div>
<div class="abs" style="left:915px;top:652px;width:14px;height:7px;background:#121212"></div><div class="abs" style="left:934px;top:652px;width:13px;height:7px;background:#121212"></div>
<div class="t slab" style="left:836px;top:676px;width:222px">Active domains</div>
<div class="box" style="left:1082px;top:554px;width:222px;height:192px"></div>
<svg class="abs" style="left:1276px;top:570px" width="12" height="12" viewBox="0 0 12 12"><circle cx="6" cy="6" r="6" fill="#e0625a"/><rect x="5.1" y="2.6" width="1.8" height="4.2" fill="#121212"/><rect x="5.1" y="7.8" width="1.8" height="1.8" fill="#121212"/></svg>
<div class="t num" style="left:1082px;top:598px;width:222px;color:#e4776b;-webkit-text-stroke-color:#121212;padding-left:8px">1</div>
<div class="abs" style="left:1181px;top:652px;width:15px;height:7px;background:#121212"></div><div class="abs" style="left:1201px;top:652px;width:14px;height:7px;background:#121212"></div>
<div class="t slab" style="left:1082px;top:676px;width:222px">Due invoices</div>
<div class="box" style="left:1328px;top:554px;width:222px;height:192px"></div>
<svg class="abs" style="left:1522px;top:570px" width="12" height="12" viewBox="0 0 12 12"><path d="M6.8 0H11.4Q12 0 12 .6V5.2L5.2 11.9L0 7.1Z" fill="#b0b0b0"/></svg>
<div class="t num" style="left:1328px;top:598px;width:222px;color:#3fc473;-webkit-text-stroke-color:#121212">5</div>
<div class="t slab" style="left:1328px;top:676px;width:222px">Open tickets</div>

<!-- ================= SERVICES PANEL ================= -->
<div class="box" style="left:590px;top:778px;width:960px;height:294px;overflow:hidden"><div class="abs" style="left:0;top:0;width:960px;height:59px;background:#212121;border-bottom:1px solid #2e2e2e"></div><div class="abs" style="left:0;top:136px;width:960px;height:1px;background:#2e2e2e"></div><div class="abs" style="left:0;top:214px;width:960px;height:1px;background:#2e2e2e"></div></div>
<div class="t ph" style="left:614px;top:800px">Your Active Products/Services</div>
<svg class="abs" style="left:1514px;top:803px" width="12" height="10" viewBox="0 0 12 10"><rect x="0" y="0" width="12" height="5" rx=".6" fill="#b0b0b0"/><rect x="4.4" y="5" width="3.2" height="5" fill="#b0b0b0"/><rect x="0" y="6.6" width="12" height="1.8" fill="#b0b0b0"/></svg>
<div class="t rt" style="left:614px;top:859px"><b>Web Hosting</b> - Economy Package</div>
<div class="t rd" style="left:614px;top:884px">flexssl.net</div>
<div class="btn line mg" style="left:1443px;top:859px;width:83px">Manage</div>
<div class="bdg grn" style="left:1381px;top:865px;width:46px">Active</div>
<div class="t rt" style="left:614px;top:937px"><b>Dedicated Server</b> - Business Pacakge</div>
<div class="t rd" style="left:614px;top:962px">flexssl.net</div>
<div class="btn line mg" style="left:1443px;top:937px;width:83px">Manage</div>
<div class="t ex" style="left:1211px;top:949px">Expired 12 days ago</div>
<svg class="abs" style="left:1327px;top:949px" width="12" height="12" viewBox="0 0 12 12"><circle cx="6" cy="6" r="6" fill="#e0533b"/><rect x="5.1" y="2.6" width="1.8" height="4.2" fill="#121212"/><rect x="5.1" y="7.8" width="1.8" height="1.8" fill="#121212"/></svg>
<div class="bdg red" style="left:1355px;top:943px;width:72px">Suspended</div>
<div class="t rt" style="left:614px;top:1015px"><b>Organized SSL</b> - Comodo premiumSSL</div>
<div class="t rd" style="left:614px;top:1040px">flexssl.net</div>
<div class="btn line mg" style="left:1443px;top:1015px;width:83px">Manage</div>
<div class="t ex" style="left:1211px;top:1027px">Expired 32 days ago</div>
<svg class="abs" style="left:1327px;top:1027px" width="12" height="12" viewBox="0 0 12 12"><circle cx="6" cy="6" r="6" fill="#e0533b"/><rect x="5.1" y="2.6" width="1.8" height="4.2" fill="#121212"/><rect x="5.1" y="7.8" width="1.8" height="1.8" fill="#121212"/></svg>
<div class="bdg red" style="left:1355px;top:1021px;width:72px">Suspended</div>

<!-- ================= BOTTOM PANELS ================= -->
<div class="box" style="left:590px;top:1096px;width:468px;height:120px;overflow:hidden"><div class="abs" style="left:0;top:0;width:468px;height:59px;background:#212121;border-bottom:1px solid #2e2e2e"></div></div>
<div class="t ph" style="left:614px;top:1118px">Recent Support Tickets</div>
<svg class="abs" style="left:1021px;top:1122px" width="12" height="9" viewBox="0 0 12 9"><path d="M0 .8Q0 .1.7.1H8Q8.6.1 9 .6L12 4.5L9 8.4Q8.6 8.9 8 8.9H.7Q0 8.9 0 8.2Z" fill="#b0b0b0"/></svg>
<div class="box" style="left:1082px;top:1096px;width:468px;height:120px;overflow:hidden"><div class="abs" style="left:0;top:0;width:468px;height:59px;background:#212121;border-bottom:1px solid #2e2e2e"></div></div>
<div class="t ph" style="left:1106px;top:1118px">Manage Your Security</div>
<svg class="abs" style="left:1515px;top:1120px" width="12" height="12" viewBox="0 0 12 12"><path d="M.2 0H11.2V6Q11.2 12 5.7 12Q.2 12 .2 6Z" fill="#b0b0b0"/><path d="M2.1 1.2H6L2.1 5.9Z" fill="#212121"/></svg>






</div></body>
</html>
